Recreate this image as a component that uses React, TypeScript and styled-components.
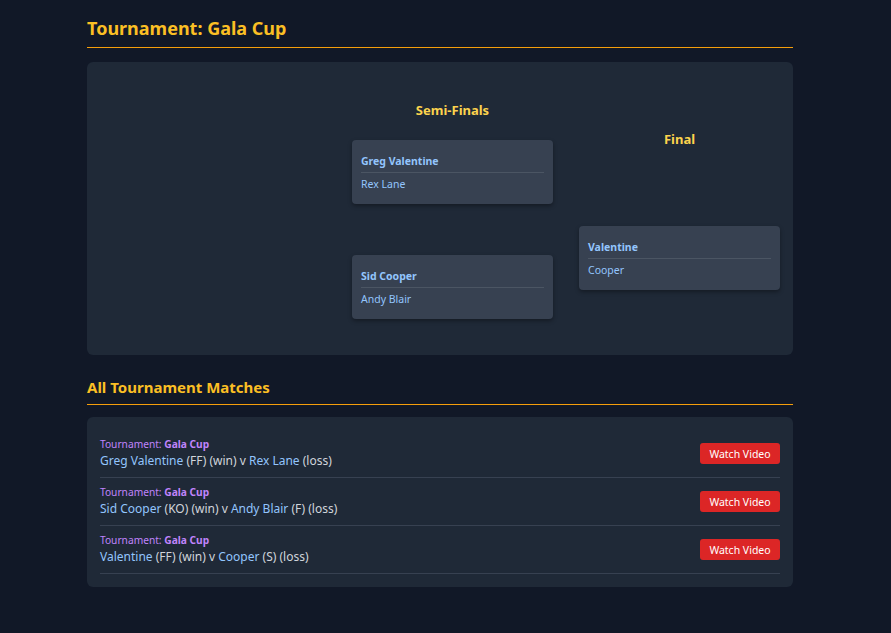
import React from 'react';
import styled, { createGlobalStyle } from 'styled-components';

const GlobalStyle = createGlobalStyle`
  body {
    margin: 0;
    background: #111827;
    font-family: "Noto Sans", "Open Sans", sans-serif;
  }
`;

const Page = styled.div`
  margin: 0 98px 0 87px;
  padding-top: 16px;
  padding-bottom: 46px;
`;

const SectionTitle = styled.h2<{ $size: number; $lh: number }>`
  margin: 0;
  color: #fbbf24;
  font-size: ${(p) => p.$size}px;
  font-weight: 700;
  line-height: ${(p) => p.$lh}px;
  padding-bottom: 6px;
  border-bottom: 1px solid #f59e0b;
`;

const Panel = styled.div<{ $mt: number }>`
  margin-top: ${(p) => p.$mt}px;
  background: #1f2937;
  border-radius: 6px;
`;

const Bracket = styled(Panel)`
  height: 293px;
  box-sizing: border-box;
  display: flex;
  justify-content: flex-end;
  align-items: center;
  gap: 26px;
  padding: 3px 13px 0 0;
  margin-bottom: 22px;
`;

const Column = styled.div<{ $headGap: number; $cardGap: number }>`
  display: flex;
  flex-direction: column;
  width: 201px;
  gap: ${(p) => p.$cardGap}px;

  & > h3 {
    margin-bottom: ${(p) => p.$headGap - p.$cardGap}px;
  }
`;

const RoundTitle = styled.h3`
  margin: 0;
  text-align: center;
  color: #fcd34d;
  font-size: 13px;
  font-weight: 700;
  line-height: 16px;
`;

const MatchCard = styled.div`
  background: #374151;
  border-radius: 4px;
  box-shadow: 0 2px 4px rgba(0, 0, 0, 0.35);
  padding: 12px 9px 13px;
  height: 64px;
  box-sizing: border-box;
`;

const Slot = styled.div<{ $winner?: boolean }>`
  color: #93c5fd;
  font-size: 10.5px;
  line-height: 14px;
  font-weight: ${(p) => (p.$winner ? 700 : 400)};
  padding: ${(p) => (p.$winner ? '2px 0 4px' : '4px 0 0')};
  border-bottom: ${(p) => (p.$winner ? '1px solid #4b5563' : 'none')};
`;

const MatchList = styled(Panel)`
  padding: 13px 13px 13px;
`;

const Row = styled.div`
  display: flex;
  align-items: center;
  justify-content: space-between;
  height: 48px;
  box-sizing: border-box;
  border-bottom: 1px solid #374151;
`;

const Info = styled.div`
  display: flex;
  flex-direction: column;
  gap: 1px;
`;

const Label = styled.div`
  color: #c084fc;
  font-size: 10.2px;
  line-height: 14px;

  & b {
    font-weight: 700;
  }
`;

const Line = styled.div`
  color: #d1d5db;
  font-size: 12px;
  line-height: 18px;
`;

const Name = styled.span`
  color: #93c5fd;
`;

const WatchButton = styled.button`
  background: #dc2626;
  color: #fff;
  border: none;
  border-radius: 3px;
  font-family: inherit;
  font-size: 10.5px;
  width: 80px;
  height: 21px;
  padding: 0;
  cursor: pointer;
`;

type Match = {
  a: string;
  aNote?: string;
  b: string;
  bNote?: string;
};

const matches: Match[] = [
  { a: 'Greg Valentine', aNote: '(FF)', b: 'Rex Lane' },
  { a: 'Sid Cooper', aNote: '(KO)', b: 'Andy Blair', bNote: '(F)' },
  { a: 'Valentine', aNote: '(FF)', b: 'Cooper', bNote: '(S)' },
];

function Card({ top, bottom }: { top: string; bottom: string }) {
  return (
    <MatchCard>
      <Slot $winner>{top}</Slot>
      <Slot>{bottom}</Slot>
    </MatchCard>
  );
}

export default function App() {
  return (
    <>
      <GlobalStyle />
      <Page>
        <SectionTitle $size={18} $lh={25}>
          Tournament: Gala Cup
        </SectionTitle>
        <Bracket $mt={14}>
          <Column $headGap={22} $cardGap={51}>
            <RoundTitle>Semi-Finals</RoundTitle>
            <Card top="Greg Valentine" bottom="Rex Lane" />
            <Card top="Sid Cooper" bottom="Andy Blair" />
          </Column>
          <Column $headGap={79} $cardGap={0}>
            <RoundTitle>Final</RoundTitle>
            <Card top="Valentine" bottom="Cooper" />
          </Column>
        </Bracket>

        <SectionTitle $size={15} $lh={21}>
          All Tournament Matches
        </SectionTitle>
        <MatchList $mt={12}>
          {matches.map((m, i) => (
            <Row key={i}>
              <Info>
                <Label>
                  Tournament: <b>Gala Cup</b>
                </Label>
                <Line>
                  <Name>{m.a}</Name> {m.aNote} (win) v <Name>{m.b}</Name>
                  {m.bNote ? ` ${m.bNote}` : ''} (loss)
                </Line>
              </Info>
              <WatchButton>Watch Video</WatchButton>
            </Row>
          ))}
        </MatchList>
      </Page>
    </>
  );
}
